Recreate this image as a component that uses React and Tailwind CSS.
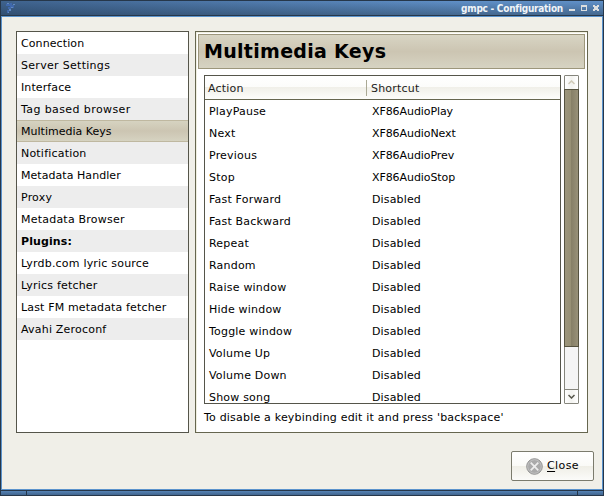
const sections = [
  ['Connection', 'tracking-[0.1px]'],
  ['Server Settings', 'tracking-[0.3px]'],
  ['Interface', 'tracking-[0.1px]'],
  ['Tag based browser', 'tracking-[0.4px]'],
  ['Multimedia Keys', 'tracking-[0.02px]'],
  ['Notification', 'tracking-[0.2px]'],
  ['Metadata Handler', 'tracking-[0.05px]'],
  ['Proxy', 'tracking-[0.2px]'],
  ['Metadata Browser', 'tracking-[0.22px]'],
  ['Plugins:', 'font-bold tracking-[0.1px]'],
  ['Lyrdb.com lyric source', 'tracking-[0.2px]'],
  ['Lyrics fetcher', 'tracking-[0.2px]'],
  ['Last FM metadata fetcher', 'tracking-[0.15px]'],
  ['Avahi Zeroconf', 'tracking-[0.2px]'],
];

const bindings = [
  ['PlayPause', 'XF86AudioPlay'],
  ['Next', 'XF86AudioNext'],
  ['Previous', 'XF86AudioPrev'],
  ['Stop', 'XF86AudioStop'],
  ['Fast Forward', 'Disabled'],
  ['Fast Backward', 'Disabled'],
  ['Repeat', 'Disabled'],
  ['Random', 'Disabled'],
  ['Raise window', 'Disabled'],
  ['Hide window', 'Disabled'],
  ['Toggle window', 'Disabled'],
  ['Volume Up', 'Disabled'],
  ['Volume Down', 'Disabled'],
  ['Show song', 'Disabled'],
];

function TitleBar() {
  return (
    <div className="flex h-[15px] shrink-0 items-center border-b border-[#26374a] bg-linear-to-b from-[#6090c8] to-[#44688f]">
      <div className="flex h-[14px] flex-1 items-center bg-linear-to-r from-[#1e3654]/50 to-transparent pl-[4px]">
        <svg width="12" height="12" viewBox="0 0 12 12" shapeRendering="crispEdges">
          <path fill="#3f68ac" d="M1 2h4v2h-4zM5 1h2v4h-2zM7 3h2v3h-2zM3 5h3v2h-3zM2 8h2v3h-2z" />
          <path fill="#6288bd" d="M2 1h2v1h-2zM6 5h2v1h-2zM8 2h2v1h-2zM4 7h2v2h-2zM3 10h1v1h-1z" />
        </svg>
      </div>
      <div className="flex h-[14px] items-center pr-[3px]">
        <span className="mr-[6px] pt-px font-['DejaVu_Sans_Condensed','DejaVu_Sans',sans-serif] text-[10px] leading-[14px] font-bold tracking-[-0.26px] whitespace-pre text-[#f0f4f8] [font-stretch:condensed]">gmpc - Configuration</span>
        <svg width="31" height="14" viewBox="0 0 31 14" shapeRendering="crispEdges" fill="#dcdedf">
          <path d="M0 8h6v2H0z" />
          <path fillRule="evenodd" d="M12 4h6v6h-6zM13 6v3h4v-3z" />
          <path d="M24 4h2v1h2V4h2v2h-1v2h1v2h-2V9h-2v1h-2V8h1V6h-1z" />
        </svg>
      </div>
    </div>
  );
}

function Sidebar() {
  return (
    <div className="w-[173px] border border-[#55554a] bg-white">
      {sections.map(([label, type], i) => {
        const tone =
          label === 'Multimedia Keys'
            ? 'border-y border-[#bfb8a0] bg-linear-to-b from-[#d6d3c1] via-[#ccc5b2] to-[#d6d3c1] leading-[22px]'
            : i % 2
              ? 'bg-[#ededed] leading-[24px]'
              : 'bg-white leading-[24px]';
        return (
          <div key={label} className={`h-[22px] pl-[4px] whitespace-pre ${tone} ${type}`}>
            {label}
          </div>
        );
      })}
    </div>
  );
}

function KeyTable() {
  return (
    <div className="flex h-[329px] w-[357px] flex-col overflow-hidden border border-[#55554a] bg-white">
      <div className="flex h-[24px] shrink-0 items-center border-b border-[#66664f] bg-[linear-gradient(to_bottom,#ffffff_0,#fcfcfa_11px,#f0efe8_11px,#fdfdfb_23px)] text-[#1d1d1b]">
        <div className="w-[161px] pt-[2px] pl-[3px] leading-[20px]">Action</div>
        <div className="h-[16px] w-px bg-[#aaa995]" />
        <div className="pt-[2px] pl-[4px] leading-[20px]">Shortcut</div>
      </div>
      {bindings.map(([action, key]) => (
        <div key={action} className="flex h-[22px] shrink-0 leading-[24px] whitespace-pre">
          <div className="w-[163px] pl-[4px]">{action}</div>
          <div className={key === 'Disabled' ? 'pl-[4px] tracking-[0.15px]' : 'pl-[4px] tracking-[-0.08px]'}>{key}</div>
        </div>
      ))}
    </div>
  );
}

function Scrollbar() {
  return (
    <div className="flex h-[329px] w-[15px] flex-col rounded-[1px] border border-[#85857c] bg-[#f5f5f5]">
      <div className="flex h-[13px] items-center justify-center bg-linear-to-r from-white via-[#f3f3f0] to-white">
        <svg width="7" height="5" viewBox="0 0 7 5" fill="none" stroke="#cfcab8" strokeWidth="1.5"><path d="M.5 4 3.5 1l3 3" /></svg>
      </div>
      <div className="-mx-px h-[258px] border border-[#55523f] bg-[linear-gradient(to_right,#9d967c_0,#979074_6px,#867f66_6px,#989178_13px)]" />
      <div className="h-[42px]" />
      <div className="flex h-[14px] items-center justify-center border-t border-[#85857c] bg-linear-to-r from-white via-[#f3f3f0] to-white">
        <svg width="7" height="5" viewBox="0 0 7 5" fill="none" stroke="#55554a" strokeWidth="1.5"><path d="M.5 1 3.5 4l3-3" /></svg>
      </div>
    </div>
  );
}

function CloseButton() {
  return (
    <button className="flex h-[30px] w-[83px] items-center rounded-[2px] border border-[#7b7b6d] bg-[linear-gradient(to_bottom,#ffffff_0,#fafaf7_14px,#efeee6_14px,#fbfbf9_28px)] pl-[14px]">
      <svg width="17" height="17" viewBox="0 0 17 17">
        <circle cx="8.5" cy="8.5" r="7.8" fill="#aaa" stroke="#919191" />
        <circle cx="8.5" cy="8.5" r="6.8" fill="none" stroke="#c1c1c1" />
        <path d="m4.7 4.7 7.6 7.6M12.3 4.7l-7.6 7.6" stroke="#ededed" strokeWidth="1.7" />
      </svg>
      <span className="ml-[4px] leading-[28px] tracking-[0.4px]">
        <span className="underline underline-offset-2">C</span>lose
      </span>
    </button>
  );
}

export default function App() {
  return (
    <div className="flex h-[496px] w-[604px] flex-col overflow-hidden border border-[#26374a] bg-[#f0efe8] font-['DejaVu_Sans',sans-serif] text-[11px] tracking-[0.2px] text-black">
      <TitleBar />
      <div className="flex h-[474px] shrink-0 flex-col border border-[#5b93cc] pl-[14px] pt-[14px]">
        <div className="flex h-[402px] gap-[6px]">
          <Sidebar />
          <div className="w-[393px] border border-[#66664f] bg-white">
            <div className="h-full border-t border-l border-[#f0efe0] pt-px pl-px">
              <div className="flex h-[35px] w-[387px] items-center border border-[#9c967b] bg-linear-to-b from-[#d8d5c4] via-[#ccc5b2] to-[#d6d3c2] pl-[5px] text-[19px] font-bold tracking-[0.3px]">
                Multimedia Keys
              </div>
              <div className="mt-[6px] flex gap-[3px] pl-[6px]">
                <KeyTable />
                <Scrollbar />
              </div>
              <div className="pl-[6px] leading-[28px] whitespace-pre">To disable a keybinding edit it and press 'backspace'</div>
            </div>
          </div>
        </div>
        <div className="flex justify-end pt-[18px] pr-[8px]">
          <CloseButton />
        </div>
      </div>
      <div className="flex h-[5px] shrink-0 border-t border-[#26374a] bg-linear-to-b from-[#5583b5] to-[#41658e]">
        <div className="w-[26px] border-r border-[#26374a]" />
        <div className="w-[551px] border-r border-[#26374a]" />
      </div>
    </div>
  );
}
